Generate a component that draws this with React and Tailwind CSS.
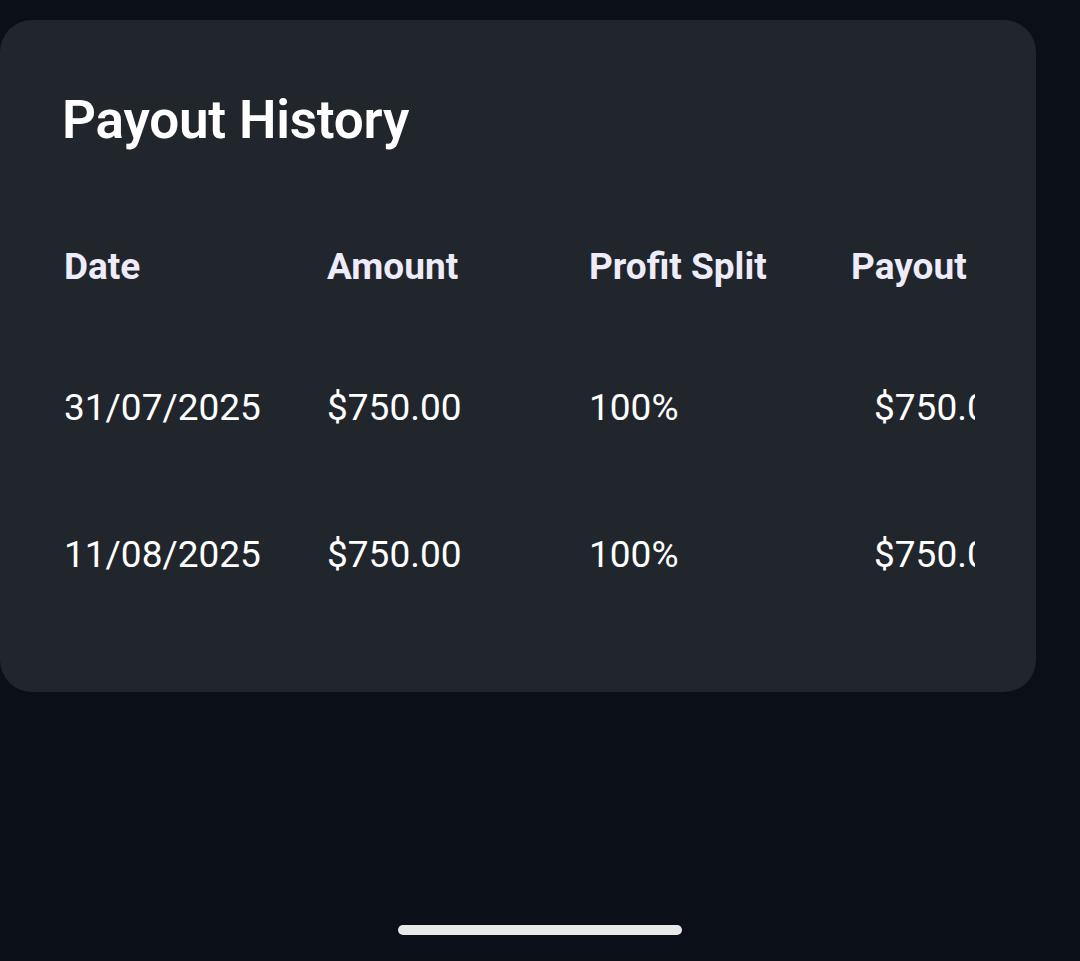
export default function App() {
  const rows = [
    ["31/07/2025", "$750.00", "100%", "$750.00"],
    ["11/08/2025", "$750.00", "100%", "$750.00"],
  ];
  return (
    <div
      className="w-[1080px] h-[961px] bg-[#0b0f18] flex flex-col overflow-hidden"
      style={{ fontFamily: "Roboto, 'Liberation Sans', sans-serif" }}
    >
      <div className="mt-[20px] w-[1036px] bg-[#21252c] rounded-[32px] pl-[64px] pr-[61px] pt-[70px] pb-[64px]">
        <h1 className="text-[53px] leading-[60px] font-semibold text-white tracking-[-0.2px] -ml-[2px]">
          Payout History
        </h1>
        <div className="mt-[50px] w-[911px] overflow-hidden">
          <div className="w-[1100px]">
            <div className="h-[134px] flex items-center text-[37px] font-bold text-[#eeebfa]">
              <div className="w-[263px] shrink-0">Date</div>
              <div className="w-[262px] shrink-0">Amount</div>
              <div className="w-[262px] shrink-0">Profit Split</div>
              <div className="w-[262px] shrink-0">Payout</div>
            </div>
            {rows.map((r, i) => (
              <div
                key={i}
                className="h-[147px] flex items-center text-[37px] font-normal text-white"
              >
                <div className="w-[263px] shrink-0">{r[0]}</div>
                <div className="w-[262px] shrink-0">{r[1]}</div>
                <div className="w-[262px] shrink-0">{r[2]}</div>
                <div className="w-[262px] shrink-0 pl-[23px]">{r[3]}</div>
              </div>
            ))}
          </div>
        </div>
      </div>
      <div className="flex-1" />
      <div className="flex justify-center pb-[26px]">
        <div className="w-[284px] h-[10px] rounded-full bg-[#e8e8ea]" />
      </div>
    </div>
  );
}
